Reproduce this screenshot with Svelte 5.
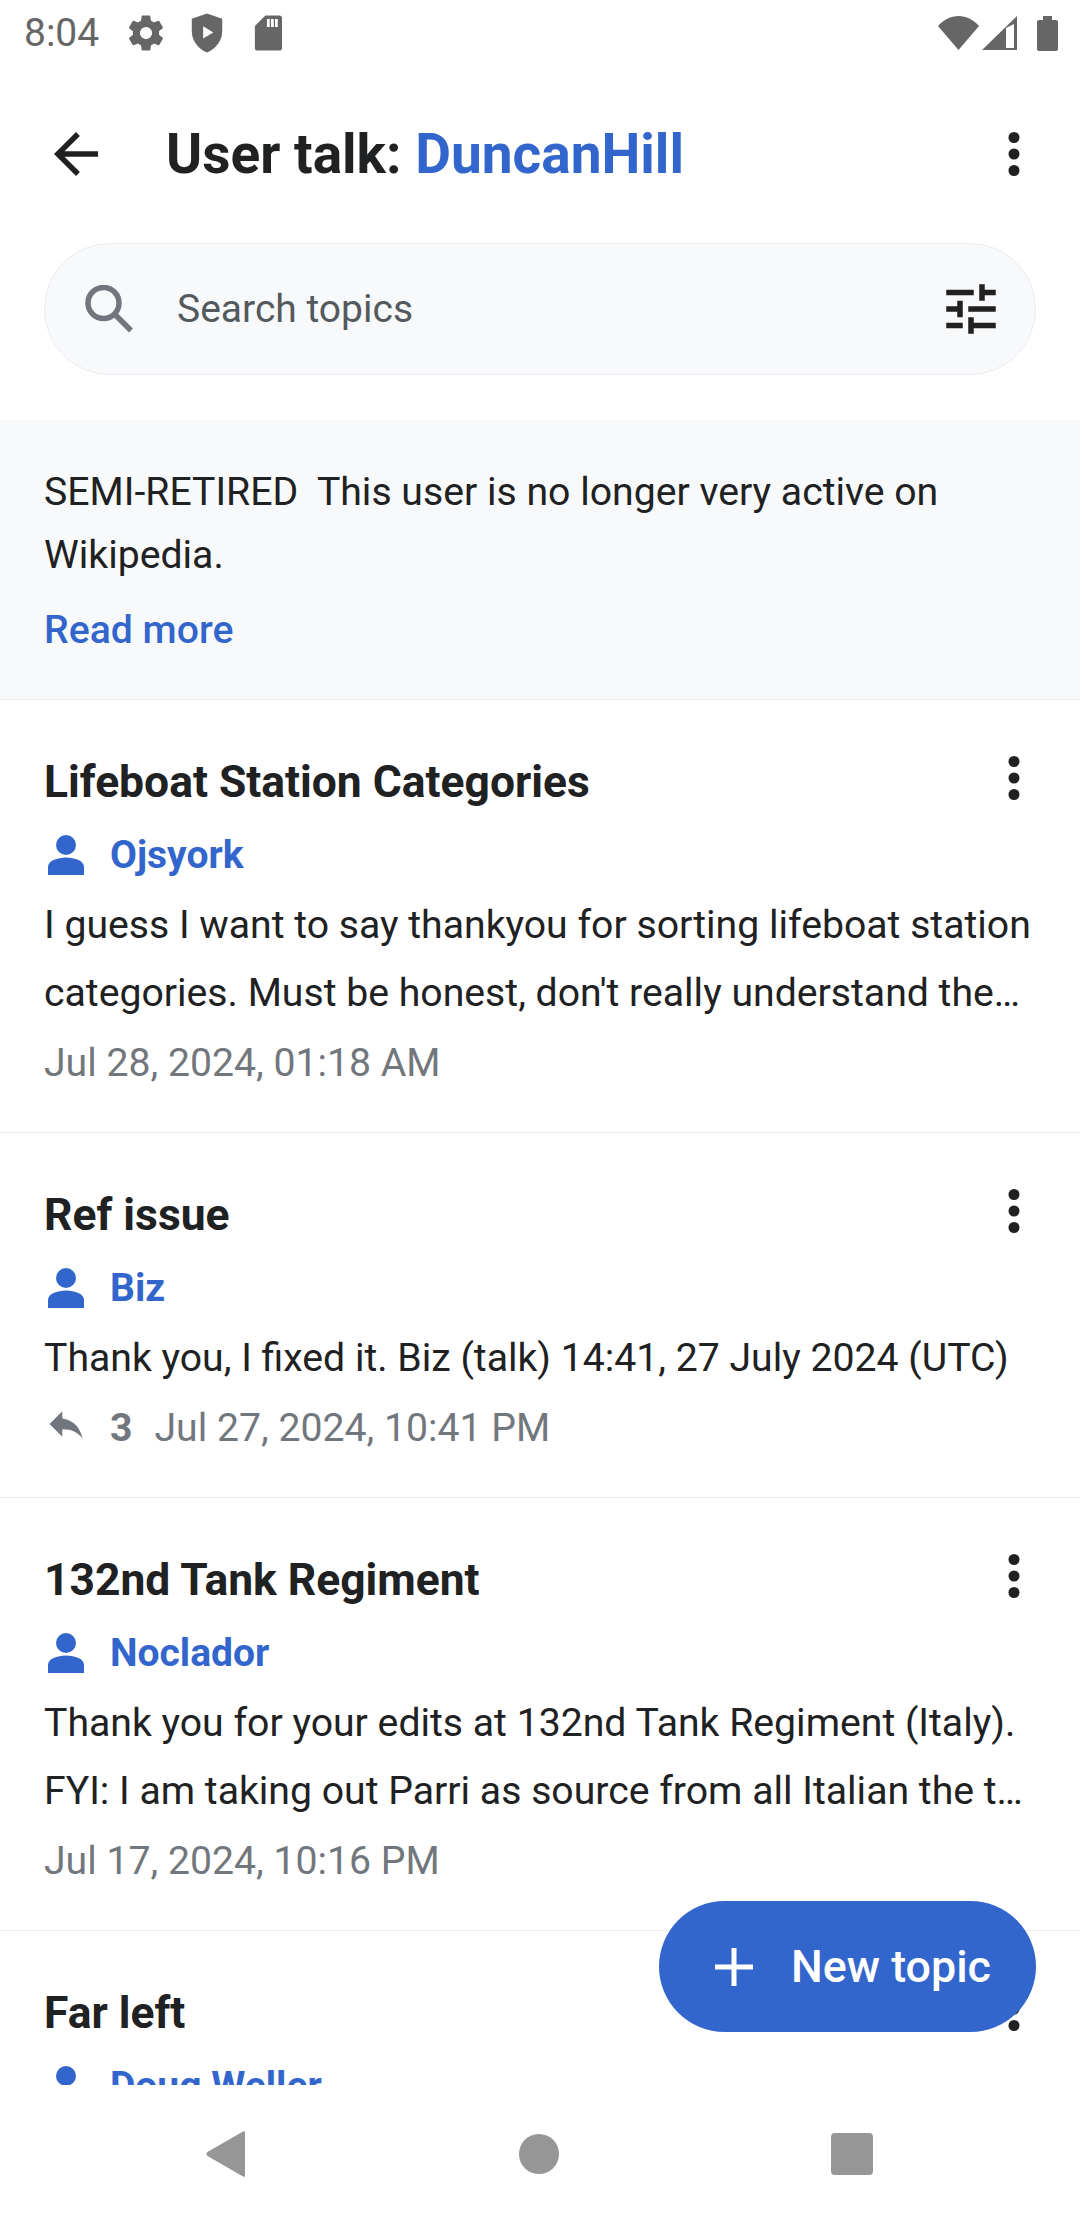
<script>
  const topics = [
    {
      title: 'Lifeboat Station Categories',
      user: 'Ojsyork',
      text: "I guess I want to say thankyou for sorting lifeboat station categories. Must be honest, don't really understand the…",
      date: 'Jul 28, 2024, 01:18 AM'
    },
    {
      title: 'Ref issue',
      user: 'Biz',
      text: 'Thank you, I fixed it. Biz (talk) 14:41, 27 July 2024 (UTC)',
      replies: 3,
      date: 'Jul 27, 2024, 10:41 PM'
    },
    {
      title: '132nd Tank Regiment',
      user: 'Noclador',
      text: 'Thank you for your edits at 132nd Tank Regiment (Italy). FYI: I am taking out Parri as source from all Italian the t…',
      date: 'Jul 17, 2024, 10:16 PM'
    },
    {
      title: 'Far left',
      user: 'Doug Weller',
      text: '',
      date: ''
    }
  ];
</script>

{#snippet dots()}
  <svg class="dots" viewBox="0 0 44 44" width="44" height="44">
    <circle cx="22" cy="5.500" r="5.500" />
    <circle cx="22" cy="22" r="5.500" />
    <circle cx="22" cy="38.500" r="5.500" />
  </svg>
{/snippet}

<div class="screen">
  <div class="statusbar">
    <div class="status-left">
      <span class="time">8:04</span>
      <svg class="st" viewBox="0 0 24 24" width="42" height="42">
        <path d="M19.4 13c.04-.32.1-.66.1-1s-.06-.68-.1-1l2.100-1.650c.2-.15.25-.42.12-.64l-2-3.460c-.12-.22-.39-.3-.61-.22l-2.490 1c-.52-.4-1.080-.73-1.690-.98l-.38-2.650A.49.49 0 0 0 14 2h-4c-.25 0-.46.18-.49.42l-.38 2.650c-.61.25-1.170.59-1.690.98l-2.490-1c-.23-.09-.49 0-.61.22l-2 3.460c-.13.22-.07.49.12.64L4.570 11c-.04.32-.07.66-.07 1s.03.68.07 1l-2.110 1.650c-.19.15-.25.42-.12.64l2 3.460c.12.22.39.3.61.22l2.490-1c.52.4 1.080.73 1.690.98l.38 2.650c.03.24.24.42.49.42h4c.25 0 .46-.18.49-.42l.38-2.650c.61-.25 1.170-.59 1.690-.98l2.490 1c.23.09.49 0 .61-.22l2-3.460c.12-.22.07-.49-.12-.64zM12 15.500a3.500 3.500 0 1 1 0-7 3.500 3.500 0 0 1 0 7z" />
      </svg>
      <svg class="st" viewBox="0 0 24 24" width="42" height="42">
        <path fill-rule="evenodd" d="M12 .8 3.300 3.800V11c0 5.300 3.700 10.200 8.700 12.200 5-2 8.700-6.900 8.700-12.200V3.800zM9.800 8.200v7l5.800-3.500z" />
      </svg>
      <svg class="st" viewBox="0 0 24 24" width="42" height="42">
        <path fill-rule="evenodd" d="M18.500 2H10.500L4.500 8v12.500c0 .9.600 1.500 1.500 1.500h12.500c.9 0 1.500-.6 1.500-1.500v-17c0-.9-.6-1.500-1.500-1.500zM13 8.600h-1.600V4H13zm2.300 0h-1.600V4h1.600zm2.300 0H16V4h1.600z" />
      </svg>
    </div>
    <div class="status-right">
      <svg class="st" viewBox="0 0 41 34" width="41" height="34"><path d="M0 10C5 4 13 0 20.500 0S36 4 41 10L20.500 34z" /></svg>
      <svg class="st signal" viewBox="0 0 35 34" width="35" height="34"><path fill-rule="evenodd" d="M35 0v34H0zM24 12v20h8V8z" /></svg>
      <svg class="st" viewBox="0 0 21 35" width="21" height="35"><path d="M6 0h9v4h4c1.100 0 2 .9 2 2v27c0 1.100-.9 2-2 2H2c-1.100 0-2-.9-2-2V6c0-1.100.9-2 2-2h4z" /></svg>
    </div>
  </div>

  <div class="appbar">
    <svg class="back" viewBox="0 0 24 24" width="66" height="66">
      <path d="M20 11H7.830l5.590-5.590L12 4l-8 8 8 8 1.410-1.410L7.830 13H20z" />
    </svg>
    <h1>User talk: <span>DuncanHill</span></h1>
    {@render dots()}
  </div>

  <div class="search-wrap">
    <div class="search">
      <svg class="mag" viewBox="0 0 48 48" width="48" height="48">
        <circle cx="18.500" cy="18" r="15.500" />
        <path d="M29.500 29 46 45.500" />
      </svg>
      <span class="placeholder">Search topics</span>
      <svg class="tune" viewBox="0 0 24 24" width="66" height="66">
        <path d="M3 17v2h6v-2H3zM3 5v2h10V5H3zm10 16v-2h8v-2h-8v-2h-2v6h2zM7 9v2H3v2h4v2h2V9H7zm14 4v-2H11v2h10zm-6-4h2V7h4V5h-4V3h-2v6z" />
      </svg>
    </div>
  </div>

  <div class="notice">
    <p>SEMI-RETIRED&nbsp; This user is no longer very active on Wikipedia.</p>
    <span class="more">Read more</span>
  </div>

  <div class="list">
    {#each topics as t}
      <div class="topic">
        <div class="topic-head">
          <h2>{t.title}</h2>
          {@render dots()}
        </div>
        <div class="author">
          <svg class="person" viewBox="0 0 36 40" width="36" height="40">
            <circle cx="18" cy="10" r="10" />
            <path d="M0 40v-8c0-6 9-9.500 18-9.500S36 26 36 32v8z" />
          </svg>
          <span>{t.user}</span>
        </div>
        {#if t.text}
          <p class="snippet">{t.text}</p>
        {/if}
        {#if t.date}
          <div class="meta">
            {#if t.replies}
              <svg class="reply" viewBox="0 0 24 24" width="44" height="44">
                <path d="M10 9V5l-7 7 7 7v-4.100c5 0 8.500 1.600 11 5.100-1-5-4-10-11-11z" />
              </svg>
              <b>{t.replies}</b>
            {/if}
            <span>{t.date}</span>
          </div>
        {/if}
      </div>
    {/each}
  </div>

  <div class="fab">
    <svg viewBox="0 0 40 40" width="40" height="40"><path d="M17.500 1h5v16.500H39v5H22.500V39h-5V22.500H1v-5h16.500z" /></svg>
    <span>New topic</span>
  </div>

  <div class="navbar">
    <svg viewBox="0 0 42 48" width="42" height="48"><path d="M38 1.500c1-.7 2-.2 2 1v43c0 1.200-1 1.700-2 1L2.500 26c-1.400-1-1.400-3 0-4z" /></svg>
    <svg viewBox="0 0 42 48" width="42" height="48"><ellipse cx="21" cy="24" rx="20" ry="20" /></svg>
    <svg viewBox="0 0 42 42" width="42" height="42"><rect x="0" y="0" width="42" height="42" rx="4" /></svg>
  </div>
</div>

<style>
  :global(body) {
    margin: 0;
    background: #fff;
  }
  .screen {
    position: relative;
    width: 1080px;
    height: 2220px;
    overflow: hidden;
    background: #fff;
    font-family: Roboto, "Liberation Sans", sans-serif;
    color: #202122;
  }
  .statusbar {
    display: flex;
    justify-content: space-between;
    align-items: center;
    height: 66px;
    padding: 0 22px 0 24px;
    box-sizing: border-box;
  }
  .status-left, .status-right {
    display: flex;
    align-items: center;
  }
  .status-left { gap: 19px; }
  .status-right { gap: 3px; }
  .time {
    font-size: 39px;
    color: #666;
    margin-right: 7px;
  }
  .st { fill: #666; }
  .signal { margin-right: 17px; }
  .appbar {
    display: flex;
    align-items: center;
    height: 110px;
    margin-top: 33px;
    padding: 0 44px 0 43px;
  }
  .back { fill: #202122; flex: none; }
  h1 {
    flex: 1;
    margin: 0 0 0 57px;
    font-size: 55px;
    font-weight: 700;
  }
  h1 span { color: #3366cc; }
  .dots { fill: #202122; flex: none; }
  .search-wrap {
    padding: 34px 44px 45px;
  }
  .search {
    display: flex;
    align-items: center;
    height: 132px;
    box-sizing: border-box;
    background: #f8f9fa;
    border: 1px solid #eaecf0;
    border-radius: 66px;
    padding: 0 31px 0 40px;
  }
  .mag {
    flex: none;
    fill: none;
    stroke: #72777d;
    stroke-width: 5.500;
  }
  .placeholder {
    flex: 1;
    margin-left: 44px;
    font-size: 39px;
    color: #54595d;
  }
  .tune { fill: #202122; flex: none; }
  .notice {
    background: #f8f9fa;
    border-bottom: 1px solid #eaecf0;
    padding: 41px 44px 44px;
  }
  .notice p {
    margin: 0;
    font-size: 39.2px;
    line-height: 63px;
  }
  .more {
    display: block;
    margin-top: 18px;
    font-size: 39.2px;
    font-weight: 500;
    line-height: 50px;
    color: #3366cc;
  }
  .topic {
    padding: 54px 0 33px 44px;
    border-bottom: 1px solid #eaecf0;
  }
  .topic-head {
    display: flex;
    justify-content: space-between;
    align-items: center;
    height: 56px;
    padding-right: 44px;
  }
  .topic-head .dots { margin-top: -8px; }
  h2 {
    margin: 0;
    font-size: 44.400px;
    font-weight: 700;
  }
  .author {
    display: flex;
    align-items: center;
    height: 64px;
    margin-top: 13px;
    margin-bottom: 4px;
    padding-left: 4px;
    color: #3366cc;
    font-size: 39px;
    font-weight: 700;
  }
  .person { fill: #3366cc; flex: none; margin-right: 26px; }
  .snippet {
    margin: 0;
    padding-right: 44px;
    font-size: 39.2px;
    line-height: 68px;
  }
  .meta {
    display: flex;
    align-items: center;
    height: 72px;
    font-size: 39.2px;
    color: #72777d;
  }
  .reply { fill: #72777d; flex: none; margin: -8px 22px 0 0; }
  .meta b { font-weight: 700; margin-right: 22px; }
  .fab {
    position: absolute;
    left: 659px;
    top: 1901px;
    display: flex;
    align-items: center;
    width: 377px;
    height: 131px;
    box-sizing: border-box;
    padding-left: 55px;
    gap: 37px;
    border-radius: 66px;
    background: #3366cc;
    color: #fff;
    font-size: 44.800px;
    font-weight: 500;
  }
  .fab svg { fill: #fff; flex: none; }
  .navbar {
    position: absolute;
    left: 0;
    right: 0;
    bottom: 0;
    height: 135px;
    box-sizing: border-box;
    padding: 2px 207px 0 205px;
    display: flex;
    align-items: center;
    justify-content: space-between;
    background: #fff;
  }
  .navbar svg { fill: #969696; }
</style>
